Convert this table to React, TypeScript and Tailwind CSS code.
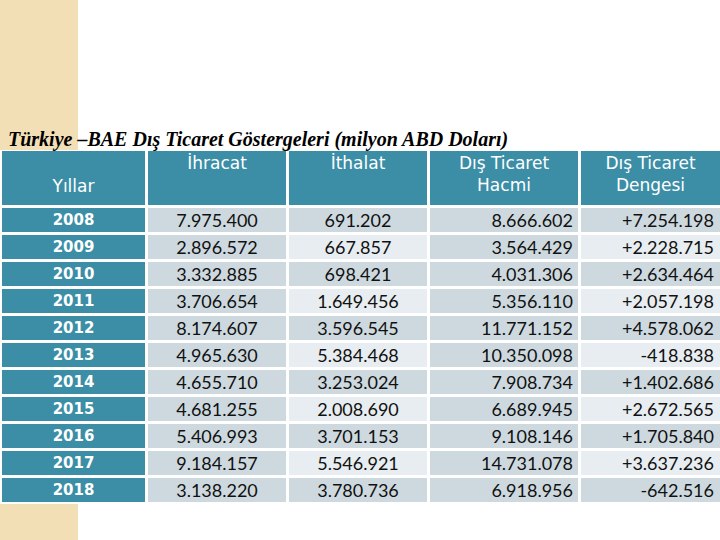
import React from 'react';

const rows = [
  ['2008', '7.975.400', '691.202', '8.666.602', '+7.254.198'],
  ['2009', '2.896.572', '667.857', '3.564.429', '+2.228.715'],
  ['2010', '3.332.885', '698.421', '4.031.306', '+2.634.464'],
  ['2011', '3.706.654', '1.649.456', '5.356.110', '+2.057.198'],
  ['2012', '8.174.607', '3.596.545', '11.771.152', '+4.578.062'],
  ['2013', '4.965.630', '5.384.468', '10.350.098', '-418.838'],
  ['2014', '4.655.710', '3.253.024', '7.908.734', '+1.402.686'],
  ['2015', '4.681.255', '2.008.690', '6.689.945', '+2.672.565'],
  ['2016', '5.406.993', '3.701.153', '9.108.146', '+1.705.840'],
  ['2017', '9.184.157', '5.546.921', '14.731.078', '+3.637.236'],
  ['2018', '3.138.220', '3.780.736', '6.918.956', '-642.516'],
];

export default function App() {
  return (
    <div className="w-[720px] h-[540px] overflow-hidden bg-[linear-gradient(to_right,#f3dfb6_78px,#ffffff_78px)]">
      <div className="h-[128px]" />

      {/* Title */}
      <div className="h-[22px] pl-[8px] font-['Liberation_Serif',serif] italic font-bold text-[20px] leading-[22px] text-black whitespace-nowrap">
        Türkiye –BAE Dış Ticaret Göstergeleri (milyon ABD Doları)
      </div>

      {/* Table */}
      <div className="bg-white pl-[2px] pt-[1px] pb-[2px] grid grid-cols-[143px_138px_138px_148px_139px] gap-[3px] font-['Lato',sans-serif]">
        {/* Header */}
        <div className="h-[54px] bg-[#3b8ea6] text-white text-[17px] font-['DejaVu_Sans',sans-serif] flex items-end justify-center pb-[8px] leading-[22px]">
          Yıllar
        </div>
        <div className="h-[54px] bg-[#3b8ea6] text-white text-[17px] font-['DejaVu_Sans',sans-serif] text-center pt-[1px] leading-[22px]">
          İhracat
        </div>
        <div className="h-[54px] bg-[#3b8ea6] text-white text-[17px] font-['DejaVu_Sans',sans-serif] text-center pt-[1px] leading-[22px]">
          İthalat
        </div>
        <div className="h-[54px] bg-[#3b8ea6] text-white text-[17px] font-['DejaVu_Sans',sans-serif] text-center pt-[1px] leading-[22px]">
          Dış Ticaret
          <br />
          Hacmi
        </div>
        <div className="h-[54px] bg-[#3b8ea6] text-white text-[17px] font-['DejaVu_Sans',sans-serif] text-center pt-[1px] leading-[22px]">
          Dış Ticaret
          <br />
          Dengesi
        </div>

        {rows.map((r, i) => {
          const light = i % 2 === 1;
          return (
            <React.Fragment key={r[0]}>
              <div className="h-[24px] bg-[#3b8ea6] text-white font-bold text-[15px] font-['DejaVu_Sans',sans-serif] leading-[24px] text-center">
                {r[0]}
              </div>
              <div className="h-[24px] bg-[#cdd9df] text-[#111] text-[18px] leading-[24px] text-center">
                {r[1]}
              </div>
              <div
                className={
                  light
                    ? 'h-[24px] bg-[#e7edf0] text-[#111] text-[18px] leading-[24px] text-center'
                    : 'h-[24px] bg-[#cdd9df] text-[#111] text-[18px] leading-[24px] text-center'
                }
              >
                {r[2]}
              </div>
              <div className="h-[24px] bg-[#cdd9df] text-[#111] text-[18px] leading-[24px] text-right pr-[5px]">
                {r[3]}
              </div>
              <div
                className={
                  light
                    ? 'h-[24px] bg-[#e7edf0] text-[#111] text-[18px] leading-[24px] text-right pr-[6px]'
                    : 'h-[24px] bg-[#cdd9df] text-[#111] text-[18px] leading-[24px] text-right pr-[6px]'
                }
              >
                {r[4]}
              </div>
            </React.Fragment>
          );
        })}
      </div>
    </div>
  );
}
